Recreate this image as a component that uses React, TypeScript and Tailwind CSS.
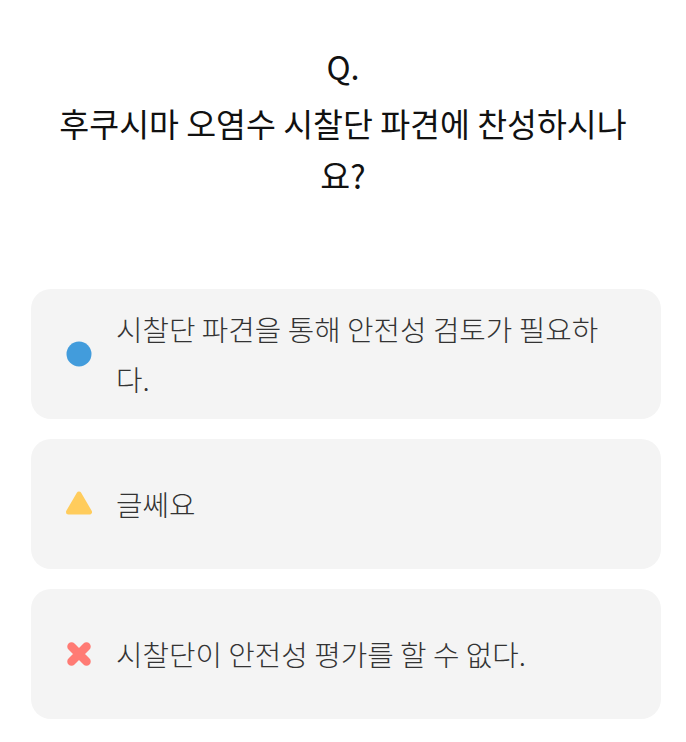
const options = [
  { icon: 'circle', text: '시찰단 파견을 통해 안전성 검토가 필요하다.' },
  { icon: 'triangle', text: '글쎄요' },
  { icon: 'cross', text: '시찰단이 안전성 평가를 할 수 없다.' },
]

function OptionIcon({ kind }: { kind: string }) {
  if (kind === 'circle') {
    return (
      <svg width="26" height="26" viewBox="0 0 26 26">
        <circle cx="13" cy="13" r="12.5" fill="#429cdc" />
      </svg>
    )
  }
  if (kind === 'triangle') {
    return (
      <svg width="26" height="26" viewBox="0 0 26 26">
        <path
          d="M13 3 L23.5 21 L2.5 21 Z"
          fill="#ffcc5c"
          stroke="#ffcc5c"
          strokeWidth="5"
          strokeLinejoin="round"
        />
      </svg>
    )
  }
  return (
    <svg width="26" height="26" viewBox="0 0 26 26">
      <path
        d="M5.5 5.5 L20.5 20.5 M20.5 5.5 L5.5 20.5"
        stroke="#ff7b74"
        strokeWidth="8.5"
        strokeLinecap="round"
      />
    </svg>
  )
}

function App() {
  return (
    <div
      className="min-h-screen bg-white pb-6"
      style={{ fontFamily: '"Noto Sans CJK KR", "Noto Sans", sans-serif' }}
    >
      <div className="px-[52px] pt-[40px] text-center text-[32.5px] font-normal leading-[52px] text-[#111]">
        <div className="mb-[5px]">Q.</div>
        <div>후쿠시마 오염수 시찰단 파견에 찬성하시나요?</div>
      </div>
      <div className="mt-[88px] ml-[31px] mr-[25px] flex flex-col gap-[20px]">
        {options.map((o) => (
          <div
            key={o.icon}
            className="flex h-[130px] items-center rounded-[20px] bg-[#f4f4f4] pl-[35px] pr-[50px]"
          >
            <div className="flex w-[26px] shrink-0 justify-center">
              <OptionIcon kind={o.icon} />
            </div>
            <div className="ml-[24px] text-[28.8px] font-light leading-[50px] text-[#333]">{o.text}</div>
          </div>
        ))}
      </div>
    </div>
  )
}

export default App
